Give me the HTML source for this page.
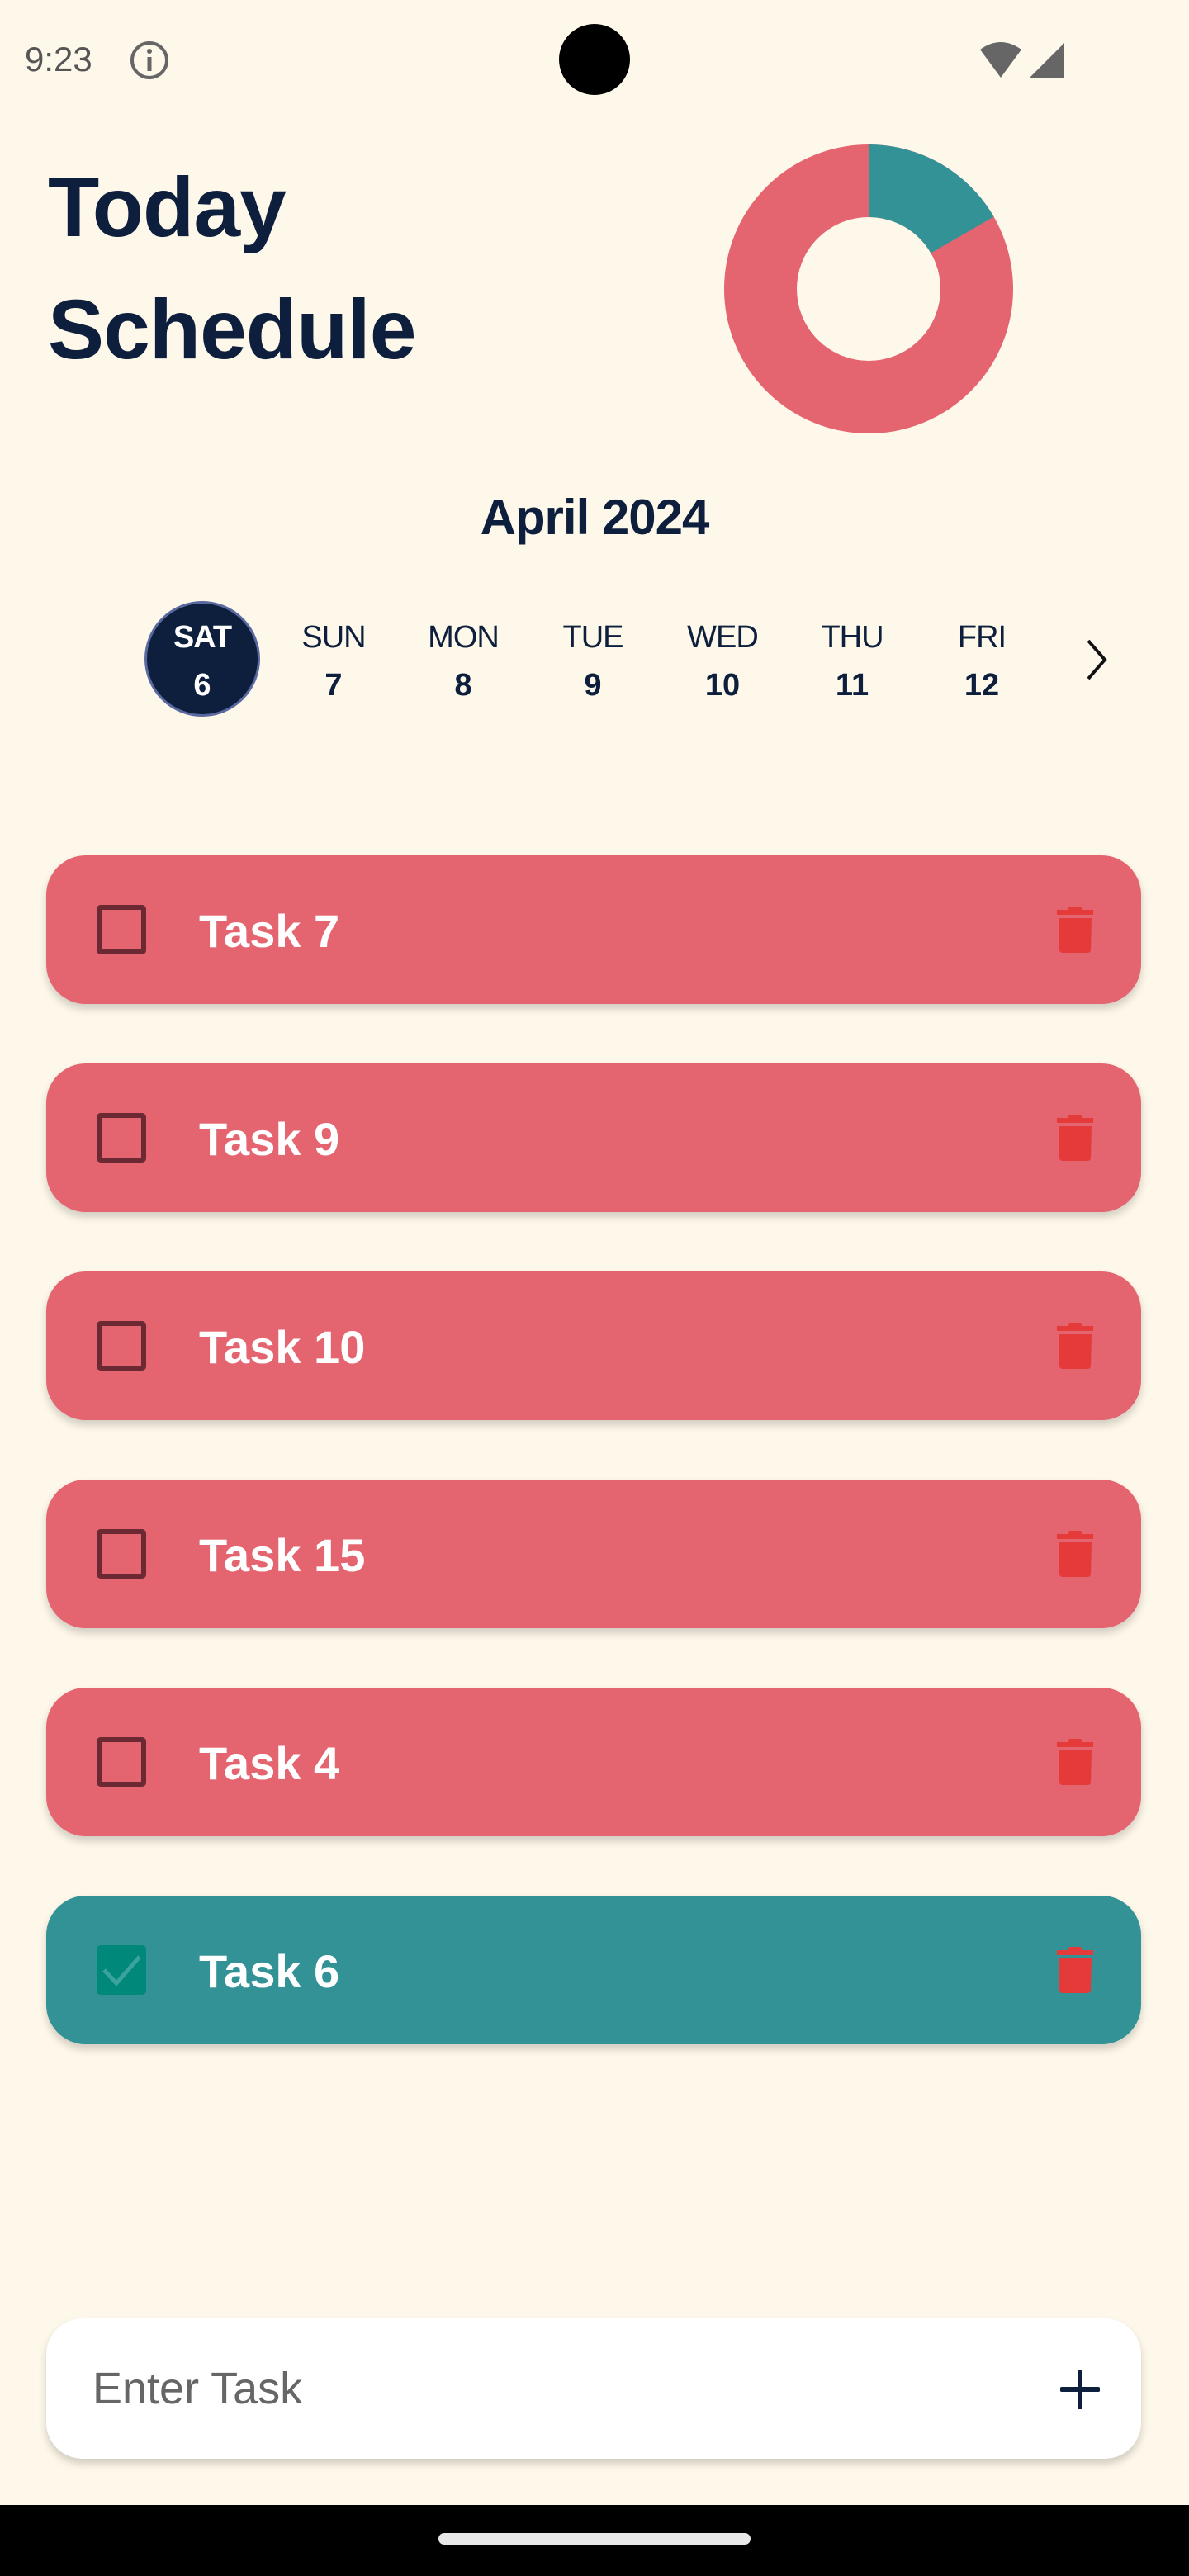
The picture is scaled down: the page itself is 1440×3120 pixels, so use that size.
<!DOCTYPE html>
<html><head><meta charset="utf-8"><style>
*{margin:0;padding:0;box-sizing:border-box}
body{width:1440px;height:3120px;background:#fef8ea;font-family:"Liberation Sans",sans-serif;position:relative;overflow:hidden;color:#0d1f3c}
.abs{position:absolute}
.title{left:58px;font-weight:bold;font-size:102px;line-height:1;letter-spacing:-1px}
.day{position:absolute;width:140px;margin-left:-70px;text-align:center;top:750px}
.day .l{font-size:38px;line-height:44px;letter-spacing:-1px}
.day .n{font-size:38px;font-weight:bold;line-height:44px;margin-top:14px}
.card{position:absolute;left:56px;width:1326px;height:180px;border-radius:48px;background:#e46470;box-shadow:0 6px 10px rgba(0,0,0,.18)}
.card .cb{position:absolute;left:61px;top:60px;width:60px;height:60px;border:6px solid #6b2a33;border-radius:5px}
.card .t{position:absolute;left:185px;top:2px;line-height:180px;font-size:56px;font-weight:bold;color:#fff}
.card svg.tr{position:absolute;left:1222px;top:62px}
</style></head><body>
<div class="abs" style="left:30px;top:48px;font-size:42px;color:#555">9:23</div>
<svg class="abs" style="left:156px;top:48px" width="50" height="50" viewBox="0 0 50 50"><circle cx="25" cy="25" r="21" fill="none" stroke="#666" stroke-width="4"/><rect x="22.5" y="21" width="5" height="17" fill="#666"/><circle cx="25" cy="14" r="3" fill="#666"/></svg>
<div class="abs" style="left:677px;top:29px;width:86px;height:86px;border-radius:50%;background:#000"></div>
<svg class="abs" style="left:1185px;top:50px" width="110" height="46" viewBox="0 0 110 46"><path d="M2 10 Q27 -8 52 10 L27 44 Z" fill="#666"/><path d="M104 2 L104 44 L62 44 Z" fill="#666"/></svg>

<div class="abs title" style="top:200px">Today</div>
<div class="abs title" style="top:348px">Schedule</div>

<svg class="abs" style="left:877px;top:175px" width="350" height="350" viewBox="-175 -175 350 350">
<circle r="131" fill="none" stroke="#e46470" stroke-width="88"/>
<path d="M0 -175 A175 175 0 0 1 151.6 -87.5 L75.3 -43.5 A87 87 0 0 0 0 -87 Z" fill="#329296"/>
</svg>

<div class="abs" style="left:0;width:1440px;top:592px;text-align:center;font-size:60px;font-weight:bold;letter-spacing:-1px">April 2024</div>

<div class="abs" style="left:175px;top:728px;width:140px;height:140px;border-radius:50%;background:#0d1f3c;border:3px solid #5a6aa0"></div>
<div class="day" style="left:245px;color:#fff"><div class="l" style="font-weight:bold">SAT</div><div class="n">6</div></div>
<div class="day" style="left:404px"><div class="l">SUN</div><div class="n">7</div></div>
<div class="day" style="left:561px"><div class="l">MON</div><div class="n">8</div></div>
<div class="day" style="left:718px"><div class="l">TUE</div><div class="n">9</div></div>
<div class="day" style="left:875px"><div class="l">WED</div><div class="n">10</div></div>
<div class="day" style="left:1032px"><div class="l">THU</div><div class="n">11</div></div>
<div class="day" style="left:1189px"><div class="l">FRI</div><div class="n">12</div></div>
<svg class="abs" style="left:1310px;top:772px" width="36" height="54" viewBox="0 0 36 54"><path d="M8 4 L28 27 L8 50" fill="none" stroke="#111" stroke-width="4"/></svg>

<div class="card" style="top:1036px"><div class="cb"></div><div class="t">Task 7</div><svg class="tr" width="48" height="56" viewBox="0 0 48 56"><path d="M17 0 H31 L33 4 H46 V10 H2 V4 H15 Z" fill="#e53a3a"/><path d="M4 14 H44 L43 52 Q43 56 39 56 H9 Q5 56 5 52 Z" fill="#e53a3a"/></svg></div>
<div class="card" style="top:1288px"><div class="cb"></div><div class="t">Task 9</div><svg class="tr" width="48" height="56" viewBox="0 0 48 56"><path d="M17 0 H31 L33 4 H46 V10 H2 V4 H15 Z" fill="#e53a3a"/><path d="M4 14 H44 L43 52 Q43 56 39 56 H9 Q5 56 5 52 Z" fill="#e53a3a"/></svg></div>
<div class="card" style="top:1540px"><div class="cb"></div><div class="t">Task 10</div><svg class="tr" width="48" height="56" viewBox="0 0 48 56"><path d="M17 0 H31 L33 4 H46 V10 H2 V4 H15 Z" fill="#e53a3a"/><path d="M4 14 H44 L43 52 Q43 56 39 56 H9 Q5 56 5 52 Z" fill="#e53a3a"/></svg></div>
<div class="card" style="top:1792px"><div class="cb"></div><div class="t">Task 15</div><svg class="tr" width="48" height="56" viewBox="0 0 48 56"><path d="M17 0 H31 L33 4 H46 V10 H2 V4 H15 Z" fill="#e53a3a"/><path d="M4 14 H44 L43 52 Q43 56 39 56 H9 Q5 56 5 52 Z" fill="#e53a3a"/></svg></div>
<div class="card" style="top:2044px"><div class="cb"></div><div class="t">Task 4</div><svg class="tr" width="48" height="56" viewBox="0 0 48 56"><path d="M17 0 H31 L33 4 H46 V10 H2 V4 H15 Z" fill="#e53a3a"/><path d="M4 14 H44 L43 52 Q43 56 39 56 H9 Q5 56 5 52 Z" fill="#e53a3a"/></svg></div>
<div class="card" style="top:2296px;background:#329296"><div class="cb" style="border:none;background:#00897b"><svg width="60" height="60" viewBox="0 0 60 60"><path d="M9 30 L24 46 L52 14" fill="none" stroke="#3aa39c" stroke-width="5"/></svg></div><div class="t">Task 6</div><svg class="tr" width="48" height="56" viewBox="0 0 48 56"><path d="M17 0 H31 L33 4 H46 V10 H2 V4 H15 Z" fill="#e53a3a"/><path d="M4 14 H44 L43 52 Q43 56 39 56 H9 Q5 56 5 52 Z" fill="#e53a3a"/></svg></div>

<div class="abs" style="left:56px;top:2808px;width:1326px;height:170px;border-radius:44px;background:#fff;box-shadow:0 6px 10px rgba(0,0,0,.18)">
<div class="abs" style="left:56px;top:0;line-height:170px;font-size:54px;color:#666">Enter Task</div>
<svg class="abs" style="left:1228px;top:62px" width="48" height="48" viewBox="0 0 48 48"><path d="M24 2 V46 M2 24 H46" stroke="#0d1f3c" stroke-width="6" stroke-linecap="round"/></svg>
</div>

<div class="abs" style="left:0;top:3034px;width:1440px;height:86px;background:#000"></div>
<div class="abs" style="left:531px;top:3068px;width:378px;height:14px;border-radius:7px;background:#e8e8e8"></div>
</body></html>
